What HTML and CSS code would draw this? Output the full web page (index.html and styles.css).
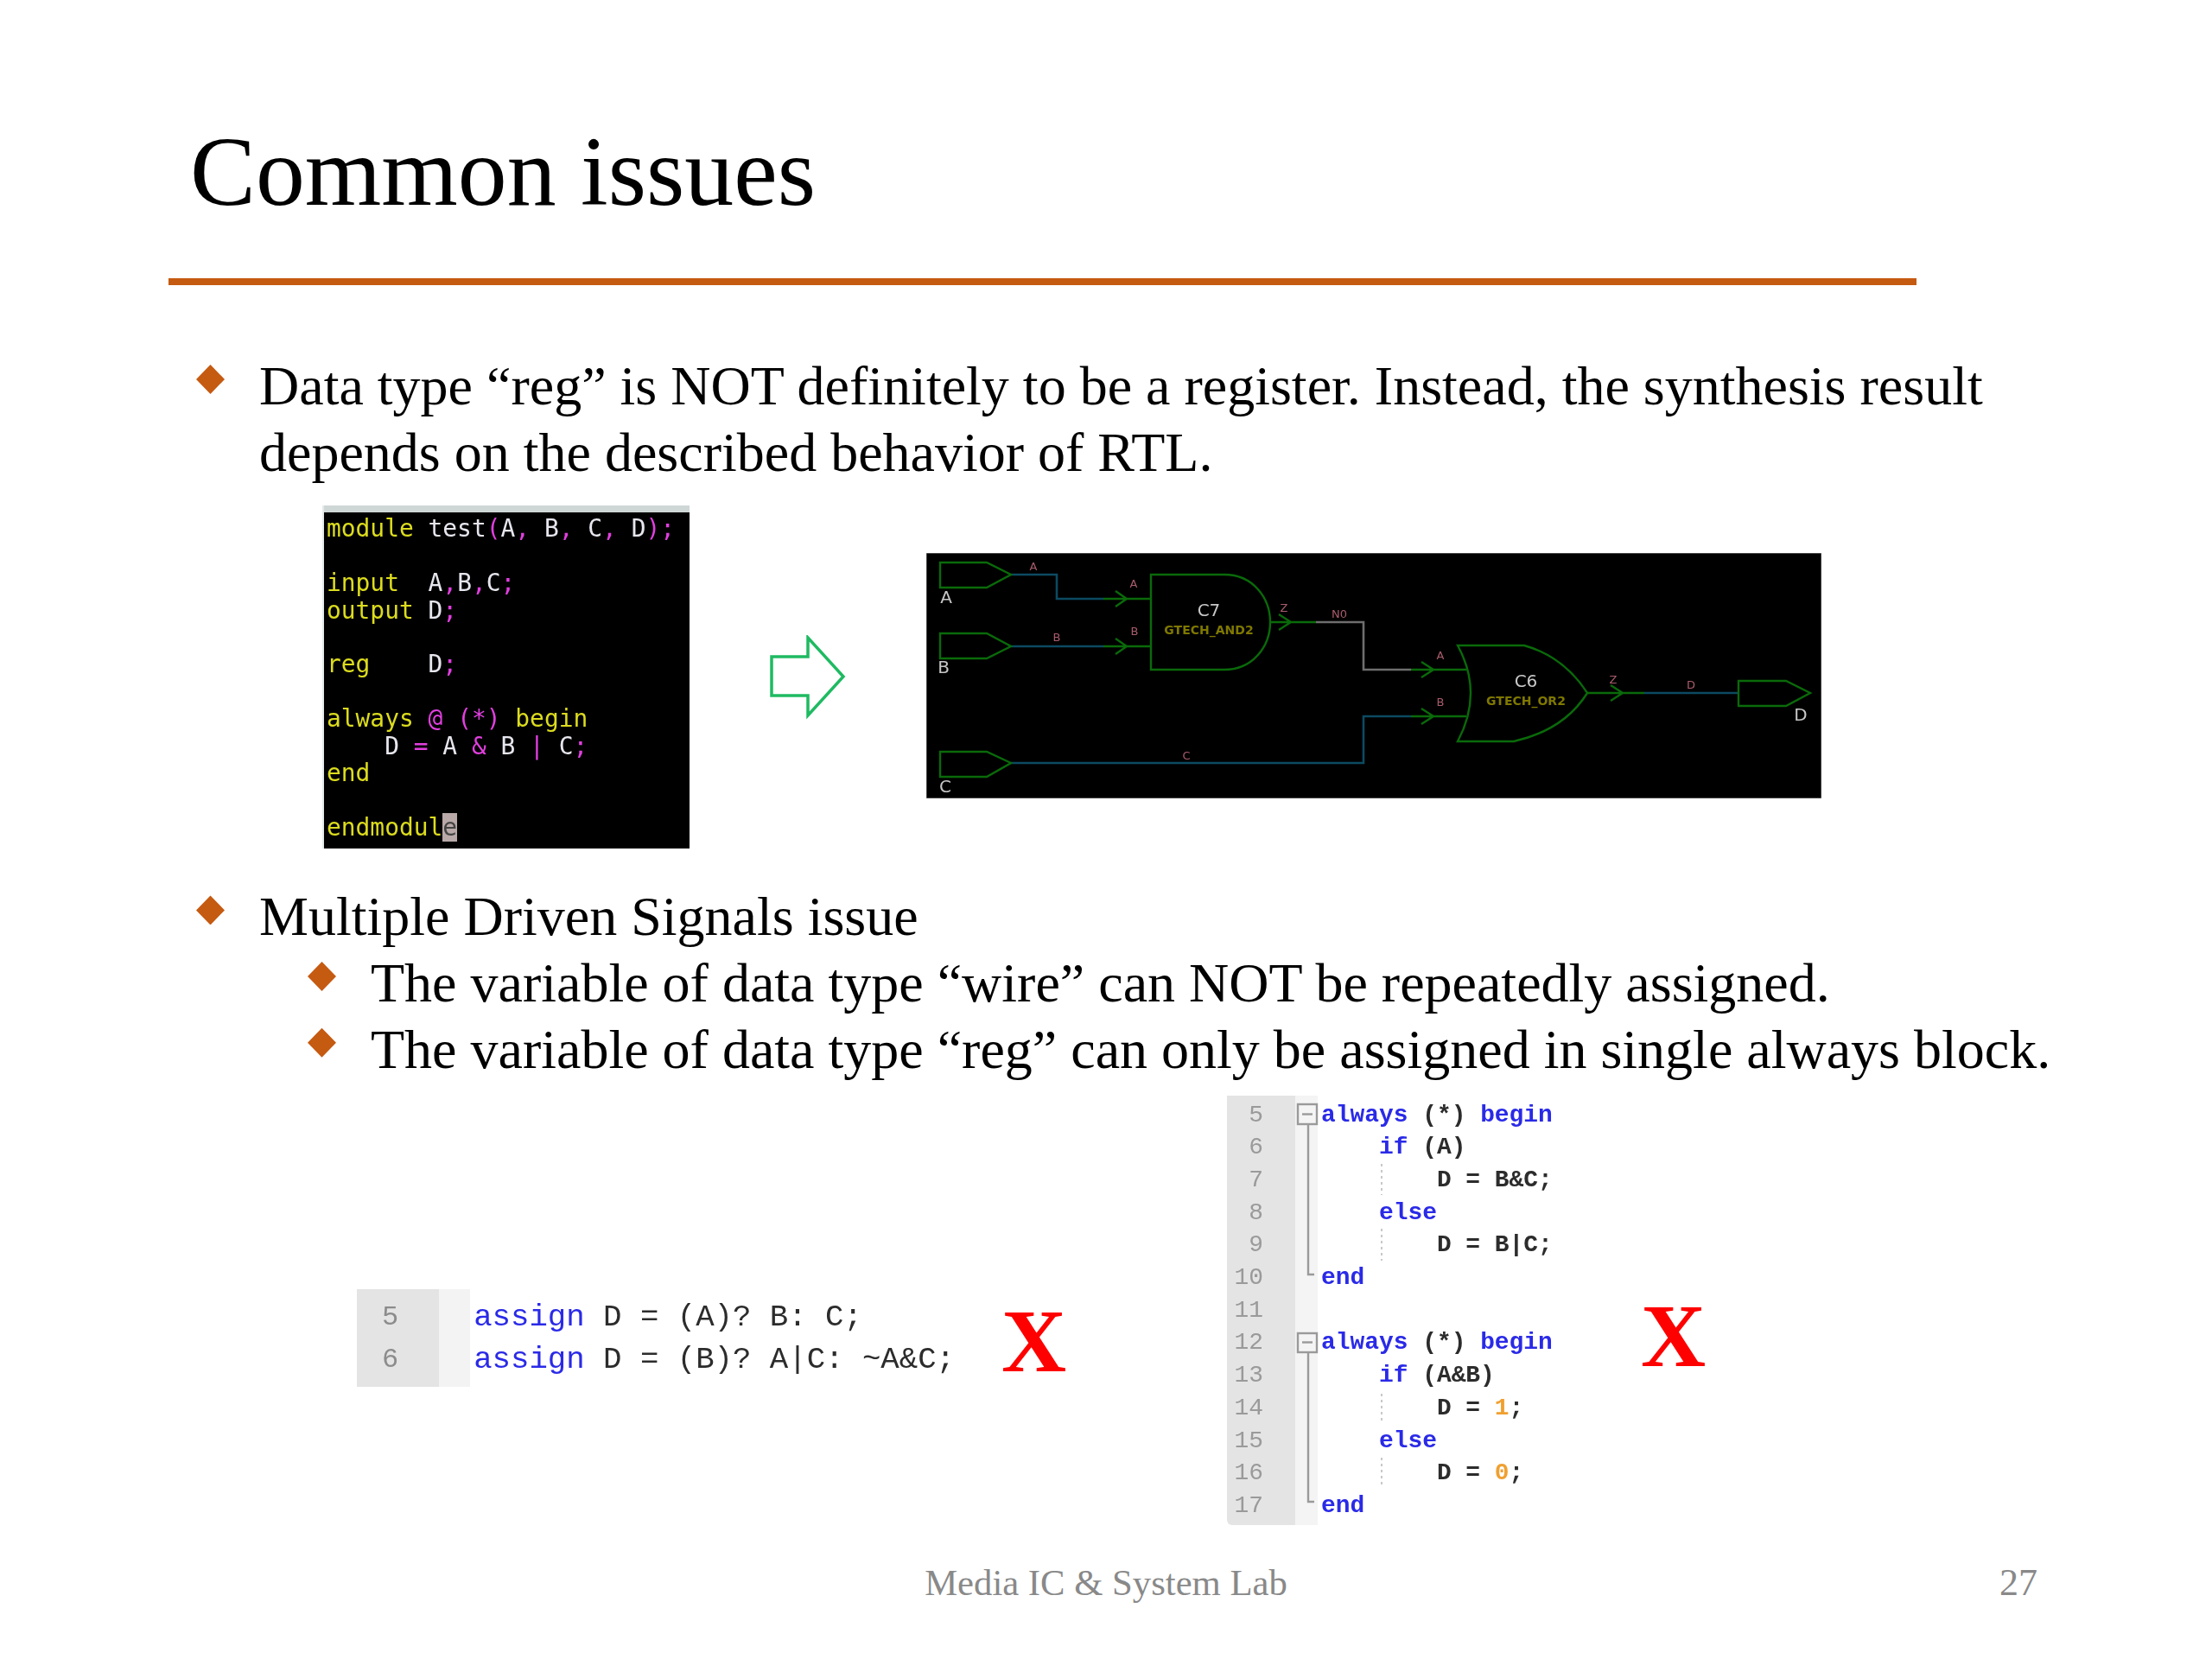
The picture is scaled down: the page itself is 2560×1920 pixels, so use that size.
FILE: index.html
```html
<!DOCTYPE html>
<html lang="en">
<head>
<meta charset="utf-8">
<title>Common issues</title>
<link rel="stylesheet" href="styles.css">
</head>
<body>
<main class="slide">
  <h1 class="title">Common issues</h1>
  <div class="rule"></div>

  <ul class="list first">
    <li class="item"><span class="bullet"></span><span>Data type “reg” is NOT definitely to be a register. Instead, the synthesis result depends on the described behavior of RTL.</span></li>
  </ul>

  <section class="figure-row">
    <pre class="terminal"><span class="y">module</span> test<span class="m">(</span>A<span class="m">,</span> B<span class="m">,</span> C<span class="m">,</span> D<span class="m">);</span>

<span class="y">input</span>  A<span class="m">,</span>B<span class="m">,</span>C<span class="m">;</span>
<span class="y">output</span> D<span class="m">;</span>

<span class="y">reg</span>    D<span class="m">;</span>

<span class="y">always</span> <span class="m">@ (*)</span> <span class="y">begin</span>
    D <span class="m">=</span> A <span class="m">&amp;</span> B <span class="m">|</span> C<span class="m">;</span>
<span class="y">end</span>

<span class="y">endmodul</span><span class="cursor">e</span></pre>

    <svg class="big-arrow" viewBox="0 0 90 98" width="90" height="98" aria-hidden="true">
      <path d="M2 25 H44 V3 L85 48 L44 93 V70 H2 Z"/>
    </svg>

    <svg class="schematic" viewBox="0 0 1036 284" width="1036" height="284" role="img" aria-label="Synthesized schematic">
      <rect class="sch-bg" x="0" y="0" width="1036" height="284"/>
      <g class="w-blue">
        <path d="M98 25 H151 V53 H205"/>
        <path d="M98 108 H205"/>
        <path d="M98 243 H506 V189 H561"/>
        <path d="M831 162 H940"/>
      </g>
      <path class="w-gray" d="M451 80 H506 V135 H561"/>
      <g class="w-green">
        <path d="M16 11 H70 L98 25 L70 40 H16 Z"/>
        <path d="M16 93 H70 L98 108 L70 122 H16 Z"/>
        <path d="M16 230 H70 L98 243 L70 259 H16 Z"/>
        <path d="M205 53 H260 M219 44 L232 53 L219 62"/>
        <path d="M205 108 H260 M219 99 L232 108 L219 117"/>
        <path d="M260 25 H345 C378 25 398 52 398 80 C398 108 378 135 345 135 H260 Z"/>
        <path d="M398 80 H451 M408 71 L422 80 L408 89"/>
        <path d="M561 135 H625 M573 126 L587 135 L573 144"/>
        <path d="M561 189 H625 M573 180 L587 189 L573 198"/>
        <path d="M615 107 Q 645 162 615 218 H 680 Q 738 205 765 162 Q 738 120 692 107 Z"/>
        <path d="M765 162 H831 M792 153 L806 162 L792 171"/>
        <path d="M940 148 H995 L1023 162 L995 177 H940 Z"/>
      </g>
      <g class="t-pin">
        <text x="23" y="58">A</text>
        <text x="20" y="139">B</text>
        <text x="22" y="277">C</text>
        <text x="1012" y="194">D</text>
      </g>
      <g class="t-net">
        <text x="124" y="20">A</text>
        <text x="240" y="40">A</text>
        <text x="151" y="102">B</text>
        <text x="241" y="95">B</text>
        <text x="414" y="68">Z</text>
        <text x="478" y="75">N0</text>
        <text x="301" y="239">C</text>
        <text x="595" y="123">A</text>
        <text x="595" y="177">B</text>
        <text x="795" y="151">Z</text>
        <text x="885" y="157">D</text>
      </g>
      <g class="t-cell">
        <text x="327" y="73">C7</text>
        <text x="694" y="155">C6</text>
      </g>
      <g class="t-lib">
        <text x="327" y="94">GTECH_AND2</text>
        <text x="694" y="176">GTECH_OR2</text>
      </g>
    </svg>
  </section>

  <ul class="list second">
    <li class="item"><span class="bullet"></span><span>Multiple Driven Signals issue</span></li>
    <li class="item sub"><span class="bullet"></span><span>The variable of data type “wire” can NOT be repeatedly assigned.</span></li>
    <li class="item sub"><span class="bullet"></span><span>The variable of data type “reg” can only be assigned in single always block.</span></li>
  </ul>

  <section class="code-row">
    <div class="code-left">
      <div class="gutter-left">
        <div>5</div>
        <div>6</div>
      </div>
      <div class="fold-left"></div>
      <div class="code code-big">
        <div class="line"><span class="k">assign</span> D = (A)? B: C;</div>
        <div class="line"><span class="k">assign</span> D = (B)? A|C: ~A&amp;C;</div>
      </div>
    </div>
    <div class="mark mark-left">X</div>
    <div class="code-right">
      <div class="gutter-right">
        <div>5</div><div>6</div><div>7</div><div>8</div><div>9</div><div>10</div><div>11</div><div>12</div><div>13</div><div>14</div><div>15</div><div>16</div><div>17</div>
      </div>
      <div class="fold-right"></div>
      <div class="code code-small">
        <div class="line"><span class="k">always</span> (*) <span class="k">begin</span></div>
        <div class="line i1"><span class="k">if</span> (A)</div>
        <div class="line i2">D = B&amp;C;</div>
        <div class="line i1"><span class="k">else</span></div>
        <div class="line i2">D = B|C;</div>
        <div class="line"><span class="k">end</span></div>
        <div class="line blank"></div>
        <div class="line"><span class="k">always</span> (*) <span class="k">begin</span></div>
        <div class="line i1"><span class="k">if</span> (A&amp;B)</div>
        <div class="line i2">D = <span class="num">1</span>;</div>
        <div class="line i1"><span class="k">else</span></div>
        <div class="line i2">D = <span class="num">0</span>;</div>
        <div class="line"><span class="k">end</span></div>
      </div>
      <svg class="fold-marks" viewBox="0 0 180 497" width="180" height="497" aria-hidden="true">
        <g class="fold-line">
          <rect x="82" y="10" width="22" height="23"/>
          <path d="M87 21.5 H99"/>
          <path d="M94 33 V207 H101"/>
          <rect x="82" y="275" width="22" height="22"/>
          <path d="M87 285.5 H99"/>
          <path d="M94 297 V470 H101"/>
        </g>
        <path class="guide" d="M179 79 V115 M179 154 V191 M179 345 V379 M179 419 V454"/>
      </svg>
    </div>
    <div class="mark mark-right">X</div>
  </section>

  <footer class="footer">
    <span></span>
    <span>Media IC &amp; System Lab</span>
    <span class="page">27</span>
  </footer>
</main>
</body>
</html>
```

FILE: styles.css
```css
* { box-sizing: border-box; }
html, body { margin: 0; padding: 0; background: #fff; }

.slide {
  width: 2560px;
  height: 1920px;
  padding-top: 136px;
  overflow: hidden;
  font-family: "Liberation Serif", "Times New Roman", serif;
  color: #000;
}

.title {
  margin: 0 0 0 220px;
  font-size: 113.8px;
  line-height: 126px;
  font-weight: 400;
}

.rule {
  width: 2023px;
  height: 8px;
  margin: 60px 0 0 195px;
  background: #c55a11;
}

.list {
  list-style: none;
  margin: 0;
  padding: 0 0 0 227px;
  width: 2420px;
  font-size: 64px;
  line-height: 76.7px;
}
.list.first { margin-top: 79px; }
.list.second { margin-top: 41px; }

.item {
  display: grid;
  grid-template-columns: 73px 1fr;
}
.item.sub { margin-left: 129px; }

.bullet {
  width: 33px;
  height: 34px;
  margin-top: 13px;
  background: #c55a11;
  clip-path: polygon(50% 0, 100% 50%, 50% 100%, 0 50%);
}

.figure-row {
  display: flex;
  align-items: flex-start;
  margin: 23px 0 0 373px;
}

.terminal {
  width: 425px;
  height: 397px;
  margin: 0;
  padding: 11px 0 0 3px;
  background: linear-gradient(#cfd6d6 0, #cfd6d6 8px, #000 8px);
  border-left: 2px solid #e4eaea;
  color: #e6e6ee;
  font-family: "DejaVu Sans Mono", monospace;
  font-size: 27.9px;
  line-height: 31.4px;
  filter: blur(0.7px);
}
.terminal .y { color: #dcdc1e; }
.terminal .m { color: #e23fe0; }
.terminal .cursor { background: #b9a9a9; color: #444; }

.big-arrow {
  margin: 150px 0 0 93px;
  flex: none;
  filter: blur(0.5px);
}
.big-arrow path { fill: #fff; stroke: #1fba62; stroke-width: 3.5; }

.schematic {
  margin: 55px 0 0 91px;
  flex: none;
  filter: blur(0.6px);
}
.sch-bg { fill: #000; stroke: #888; stroke-width: 1; }
.w-green path { fill: none; stroke: #0a6a0a; stroke-width: 2.4; }
.w-blue path { fill: none; stroke: #0c4a62; stroke-width: 2.6; }
.w-gray { fill: none; stroke: #6e6e6e; stroke-width: 2.6; }
.schematic text { font-family: "DejaVu Sans", sans-serif; text-anchor: middle; }
.t-pin text { fill: #c6c6c6; font-size: 20px; }
.t-net text { fill: #a85c6c; font-size: 13px; }
.t-cell text { fill: #c8c8c8; font-size: 20px; }
.t-lib text { fill: #7f7800; font-size: 14px; font-weight: 700; }

.code-row {
  display: flex;
  align-items: flex-start;
  margin: 14px 0 0 413px;
}

.code {
  font-family: "Liberation Mono", "Courier New", monospace;
  color: #2c2c2c;
}
.code .line { white-space: pre; }
.code .k { color: #2a2ae8; }
.code .num { color: #f0a030; }

.code-left {
  display: flex;
  flex: none;
  width: 692px;
  height: 113px;
  margin-top: 224px;
  font-family: "Liberation Mono", "Courier New", monospace;
  filter: blur(0.7px);
}
.gutter-left {
  width: 96px;
  padding: 8px 0 0 29px;
  background: #e4e4e4;
  color: #8c8c8c;
  font-size: 32px;
  line-height: 49px;
}
.fold-left { width: 36px; background: #f3f3f3; }
.code-big {
  padding: 8px 0 0 4px;
  font-size: 35.7px;
  line-height: 49px;
}

.mark {
  flex: none;
  color: #ff0000;
  font-weight: 700;
  font-size: 104px;
  line-height: 104px;
}
.mark-left { width: 77px; margin: 232px 0 0 54px; }
.mark-right { margin: 226px 0 0 0; }

.code-right {
  position: relative;
  display: flex;
  flex: none;
  width: 479px;
  height: 497px;
  margin-left: 184px;
  font-family: "Liberation Mono", "Courier New", monospace;
  filter: blur(0.6px);
}
.gutter-right {
  width: 79px;
  padding: 4px 37px 0 0;
  background: #e4e4e4;
  border-radius: 0 0 0 6px;
  color: #9a9a9a;
  font-size: 27.9px;
  line-height: 37.7px;
  text-align: right;
}
.fold-right { width: 26px; background: #f4f4f4; }
.code-small {
  padding: 4px 0 0 4px;
  font-size: 27.9px;
  font-weight: 700;
  line-height: 37.7px;
}
.line.i1 { padding-left: 4ch; }
.line.i2 { padding-left: 8ch; }
.line.blank { height: 37.7px; }
.fold-marks { position: absolute; left: 0; top: 0; pointer-events: none; }
.fold-line rect, .fold-line path { fill: none; stroke: #9a9a9a; stroke-width: 2.4; }
.guide { fill: none; stroke: #c8c8c8; stroke-width: 2; stroke-dasharray: 3 4; }

.footer {
  display: grid;
  grid-template-columns: 1fr auto 1fr;
  margin-top: 37px;
  padding: 0 202px;
  color: #898989;
  font-size: 42.7px;
  line-height: 60px;
}
.page { font-size: 44px; text-align: right; }
```
